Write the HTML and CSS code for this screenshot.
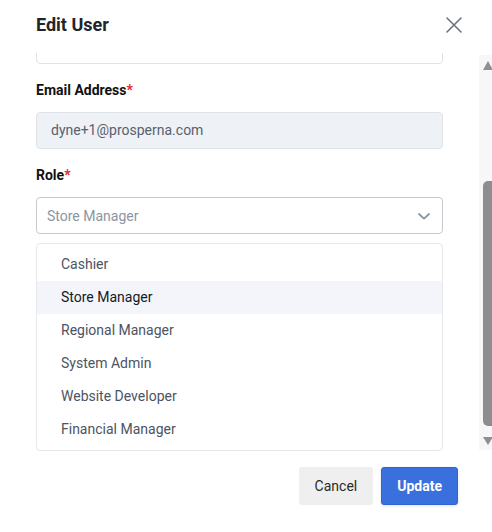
FILE: index.html
```html
<!DOCTYPE html>
<html lang="en">
<head>
<meta charset="utf-8">
<title>Edit User</title>
<link rel="stylesheet" href="styles.css">
</head>
<body>
<div class="modal">
  <div class="header">
    <h2 class="title">Edit User</h2>
    <svg class="close" width="16" height="16" viewBox="0 0 16 16" aria-label="Close">
      <path d="M1 1 L15 15 M15 1 L1 15" stroke="#6b7480" stroke-width="1.6" stroke-linecap="round" fill="none"/>
    </svg>
  </div>
  <div class="middle">
    <div class="body">
      <div class="field-partial"></div>
      <div class="group">
        <label class="label">Email Address<span class="req">*</span></label>
        <div class="input disabled">dyne+1@prosperna.com</div>
      </div>
      <div class="group">
        <label class="label">Role<span class="req">*</span></label>
        <div class="select">
          <span>Store Manager</span>
          <svg width="12" height="7" viewBox="0 0 12 7"><path d="M1 1 L6 5.6 L11 1" stroke="#8a96a3" stroke-width="1.8" fill="none" stroke-linecap="round" stroke-linejoin="round"/></svg>
        </div>
        <ul class="options">
          <li class="option">Cashier</li>
          <li class="option active">Store Manager</li>
          <li class="option">Regional Manager</li>
          <li class="option">System Admin</li>
          <li class="option">Website Developer</li>
          <li class="option">Financial Manager</li>
        </ul>
      </div>
    </div>
    <div class="scrollbar">
      <div class="arrow-up"></div>
      <div class="thumb"></div>
      <div class="arrow-down"></div>
    </div>
  </div>
  <div class="footer">
    <button class="btn cancel">Cancel</button>
    <button class="btn update">Update</button>
  </div>
</div>
</body>
</html>
```
FILE: styles.css
```css
* { box-sizing: border-box; }
html, body { margin: 0; padding: 0; background: #fff; }
body { font-family: Roboto, "Liberation Sans", Arial, sans-serif; color: #222; }

.modal { width: 492px; height: 532px; display: flex; flex-direction: column; overflow: hidden; }

.header {
  height: 53px;
  padding: 13px 30px 0 36px;
  display: flex;
  justify-content: space-between;
  align-items: flex-start;
  flex: none;
}
.title { margin: 0; font-size: 18px; line-height: 24px; font-weight: 700; color: #222428; }
.close { margin-top: 4px; }

.middle { display: flex; height: 400px; flex: none; }
.body { width: 479px; padding: 0 36px; overflow: hidden; flex: none; }

.field-partial {
  height: 38px;
  margin-top: -27px;
  border: 1px solid #dfe3e8;
  border-radius: 4px;
}

.group { margin-top: 16px; }
.label { display: block; font-size: 14px; line-height: 20px; font-weight: 700; color: #111; margin-bottom: 12px; }
.req { color: #e82424; }

.input {
  height: 37px;
  border: 1px solid #dfe3e8;
  border-radius: 4px;
  padding: 0 14px;
  font-size: 14px;
  line-height: 35px;
}
.input.disabled { background: #eef1f6; color: #59616d; }

.select {
  height: 37px;
  border: 1px solid #c5cad1;
  border-radius: 4px;
  padding: 0 12px 0 10px;
  display: flex;
  align-items: center;
  justify-content: space-between;
  font-size: 14px;
  color: #8b96a2;
}
.select svg { margin-top: 1px; }

.options {
  list-style: none;
  margin: 9px 0 0;
  padding: 4px 0;
  border: 1px solid #e5e8ed;
  border-radius: 4px;
}
.option {
  height: 33px;
  line-height: 33px;
  padding-left: 24px;
  font-size: 14px;
  color: #4b5462;
}
.option.active { background: #f3f5fa; color: #151a24; }

.scrollbar {
  width: 13px;
  margin-top: 2px;
  height: 395px;
  background: #f7f7f7;
  display: flex;
  flex-direction: column;
  align-items: flex-start;
  flex: none;
}
.arrow-up {
  margin: 6px 0 0 4px;
  width: 0; height: 0;
  border-left: 5px solid transparent;
  border-right: 5px solid transparent;
  border-bottom: 9px solid #8f8f8f;
}
.thumb {
  margin: 111px 0 0 4px;
  width: 12px;
  height: 245px;
  background: #8d8d8d;
  border-radius: 5px 0 0 5px;
}
.arrow-down {
  margin: 11px 0 0 4px;
  width: 0; height: 0;
  border-left: 5px solid transparent;
  border-right: 5px solid transparent;
  border-top: 8px solid #8f8f8f;
}

.footer {
  display: flex;
  justify-content: flex-end;
  gap: 8px;
  padding: 14px 34px 0 0;
}
.btn {
  height: 38px;
  border-radius: 3px;
  font-family: Roboto, "Liberation Sans", Arial, sans-serif;
  font-size: 14px;
  cursor: pointer;
}
.cancel { background: #efefef; border: 1px solid #efefef; color: #2a2a2a; padding: 0 15px; font-weight: 400; }
.update { background: #3a70dd; border: 1px solid #2e64d3; color: #fff; padding: 0 15px; font-weight: 700; box-shadow: 0 1px 3px rgba(0,0,0,0.12); }
```
